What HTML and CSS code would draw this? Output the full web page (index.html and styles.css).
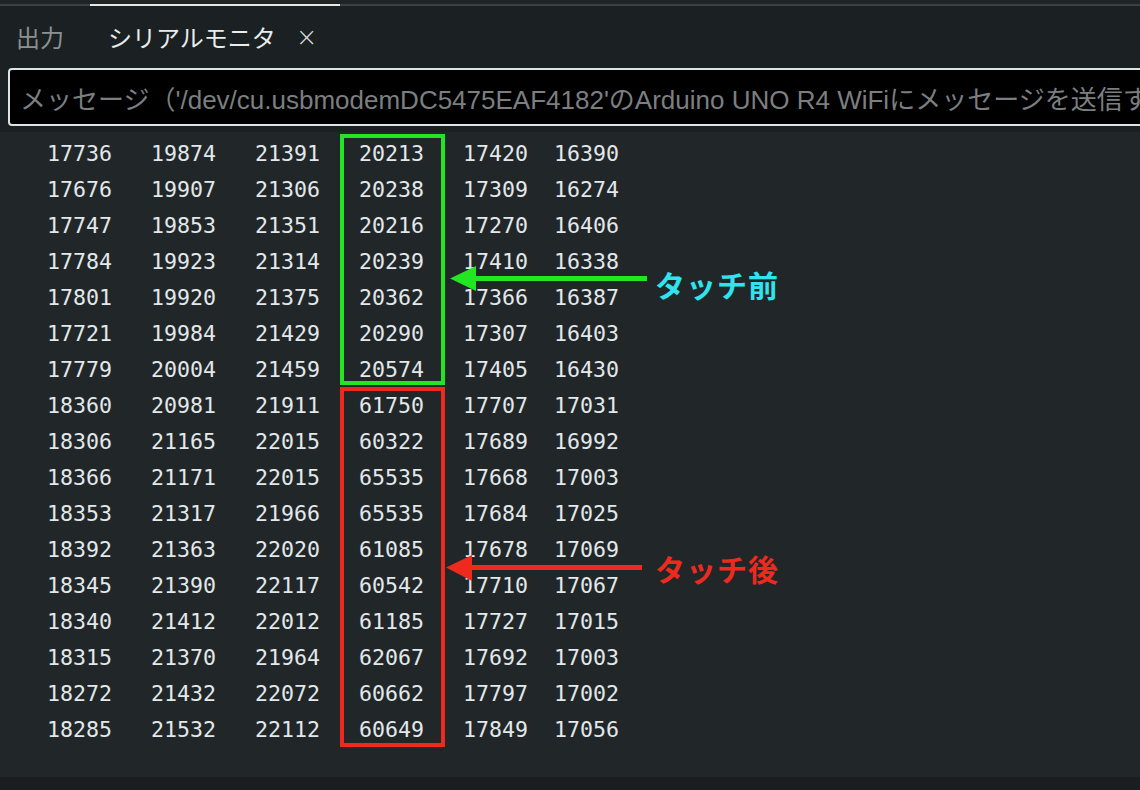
FILE: index.html
```html
<!DOCTYPE html>
<html lang="ja">
<head>
<meta charset="utf-8">
<title>シリアルモニタ</title>
<link rel="stylesheet" href="styles.css">
</head>
<body>
<div class="page">
  <div class="topstrip"></div>
  <div class="tabs">
    <div class="tab">出力</div>
    <div class="tab active">シリアルモニタ<span class="close">×</span></div>
  </div>
  <div class="inputwrap">
    <div class="input">メッセージ（'/dev/cu.usbmodemDC5475EAF4182'のArduino UNO R4 WiFiにメッセージを送信す</div>
  </div>
  <div class="output">
<pre class="log">17736   19874   21391   20213   17420  16390
17676   19907   21306   20238   17309  16274
17747   19853   21351   20216   17270  16406
17784   19923   21314   20239   17410  16338
17801   19920   21375   20362   17366  16387
17721   19984   21429   20290   17307  16403
17779   20004   21459   20574   17405  16430
18360   20981   21911   61750   17707  17031
18306   21165   22015   60322   17689  16992
18366   21171   22015   65535   17668  17003
18353   21317   21966   65535   17684  17025
18392   21363   22020   61085   17678  17069
18345   21390   22117   60542   17710  17067
18340   21412   22012   61185   17727  17015
18315   21370   21964   62067   17692  17003
18272   21432   22072   60662   17797  17002
18285   21532   22112   60649   17849  17056</pre>
  </div>
  <div class="bottomstrip"></div>

  <div class="box box-green"></div>
  <div class="box box-red"></div>
  <svg class="arrows" width="1140" height="790" viewBox="0 0 1140 790">
    <rect x="470" y="276" width="177" height="5" fill="#22e622"/>
    <polygon points="450,278.5 476,266 476,291" fill="#22e622"/>
    <rect x="466" y="565" width="176" height="5" fill="#ee2a1f"/>
    <polygon points="446,567.5 472,555 472,581" fill="#ee2a1f"/>
  </svg>
  <div class="label label-before">タッチ前</div>
  <div class="label label-after">タッチ後</div>
</div>
</body>
</html>
```
FILE: styles.css
```css
* { box-sizing: border-box; }
html, body {
  margin: 0;
  padding: 0;
  background: #1b2023;
}
.page {
  position: relative;
  width: 1140px;
  height: 790px;
  overflow: hidden;
  display: flex;
  flex-direction: column;
  background: #1b2023;
  font-family: "Noto Sans CJK JP", "Liberation Sans", sans-serif;
}
.topstrip {
  height: 4px;
  background: #1f2427;
  flex: none;
}
.tabs {
  flex: none;
  height: 64px;
  border-top: 2px solid #3b4043;
  display: flex;
  align-items: stretch;
}
.tab {
  display: flex;
  align-items: center;
  padding: 0 16px 0 16px;
  width: 90px;
  margin-top: -2px;
  border-top: 2px solid transparent;
  font-size: 24px;
  color: #8b9092;
  font-family: "Noto Sans CJK JP", sans-serif;
  line-height: 1;
}
.tab.active {
  width: 250px;
  padding-left: 18px;
  color: #e9ecec;
  border-top-color: #e6e8e8;
}
.close {
  margin-left: 20px;
  font-family: "DejaVu Sans", sans-serif;
  font-size: 26px;
  font-weight: 300;
  color: #d8dcdc;
}
.inputwrap {
  flex: none;
  padding: 0 0 0 8px;
  height: 64px;
}
.input {
  height: 58px;
  width: 1160px;
  background: #000000;
  border: 2px solid #dde4e6;
  border-radius: 4px;
  padding: 0 0 0 10px;
  display: flex;
  align-items: center;
  white-space: nowrap;
  overflow: hidden;
  font-family: "Liberation Sans", "Noto Sans CJK JP", sans-serif;
  font-size: 26px;
  color: #7b7f80;
}
.output {
  flex: 1;
  background: #212729;
  padding: 4px 0 0 47px;
}
.log {
  margin: 0;
  font-family: "DejaVu Sans Mono", monospace;
  font-size: 21.6px;
  line-height: 36px;
  color: #e3e8ea;
}
.bottomstrip {
  flex: none;
  height: 13px;
  background: #1a1e21;
}
.box {
  position: absolute;
  left: 340px;
  width: 105px;
  border: 4.5px solid;
}
.box-green {
  top: 134px;
  height: 251px;
  border-color: #22e622;
}
.box-red {
  top: 387px;
  height: 360px;
  border-color: #ee2a1f;
}
.arrows {
  position: absolute;
  left: 0;
  top: 0;
  pointer-events: none;
}
.label {
  position: absolute;
  left: 655px;
  font-family: "Noto Sans CJK JP", sans-serif;
  font-weight: 700;
  font-size: 30px;
  line-height: 40px;
  letter-spacing: 1px;
}
.label-before {
  top: 264px;
  color: #2fe4ef;
}
.label-after {
  top: 548px;
  color: #ee2a1f;
}
```
